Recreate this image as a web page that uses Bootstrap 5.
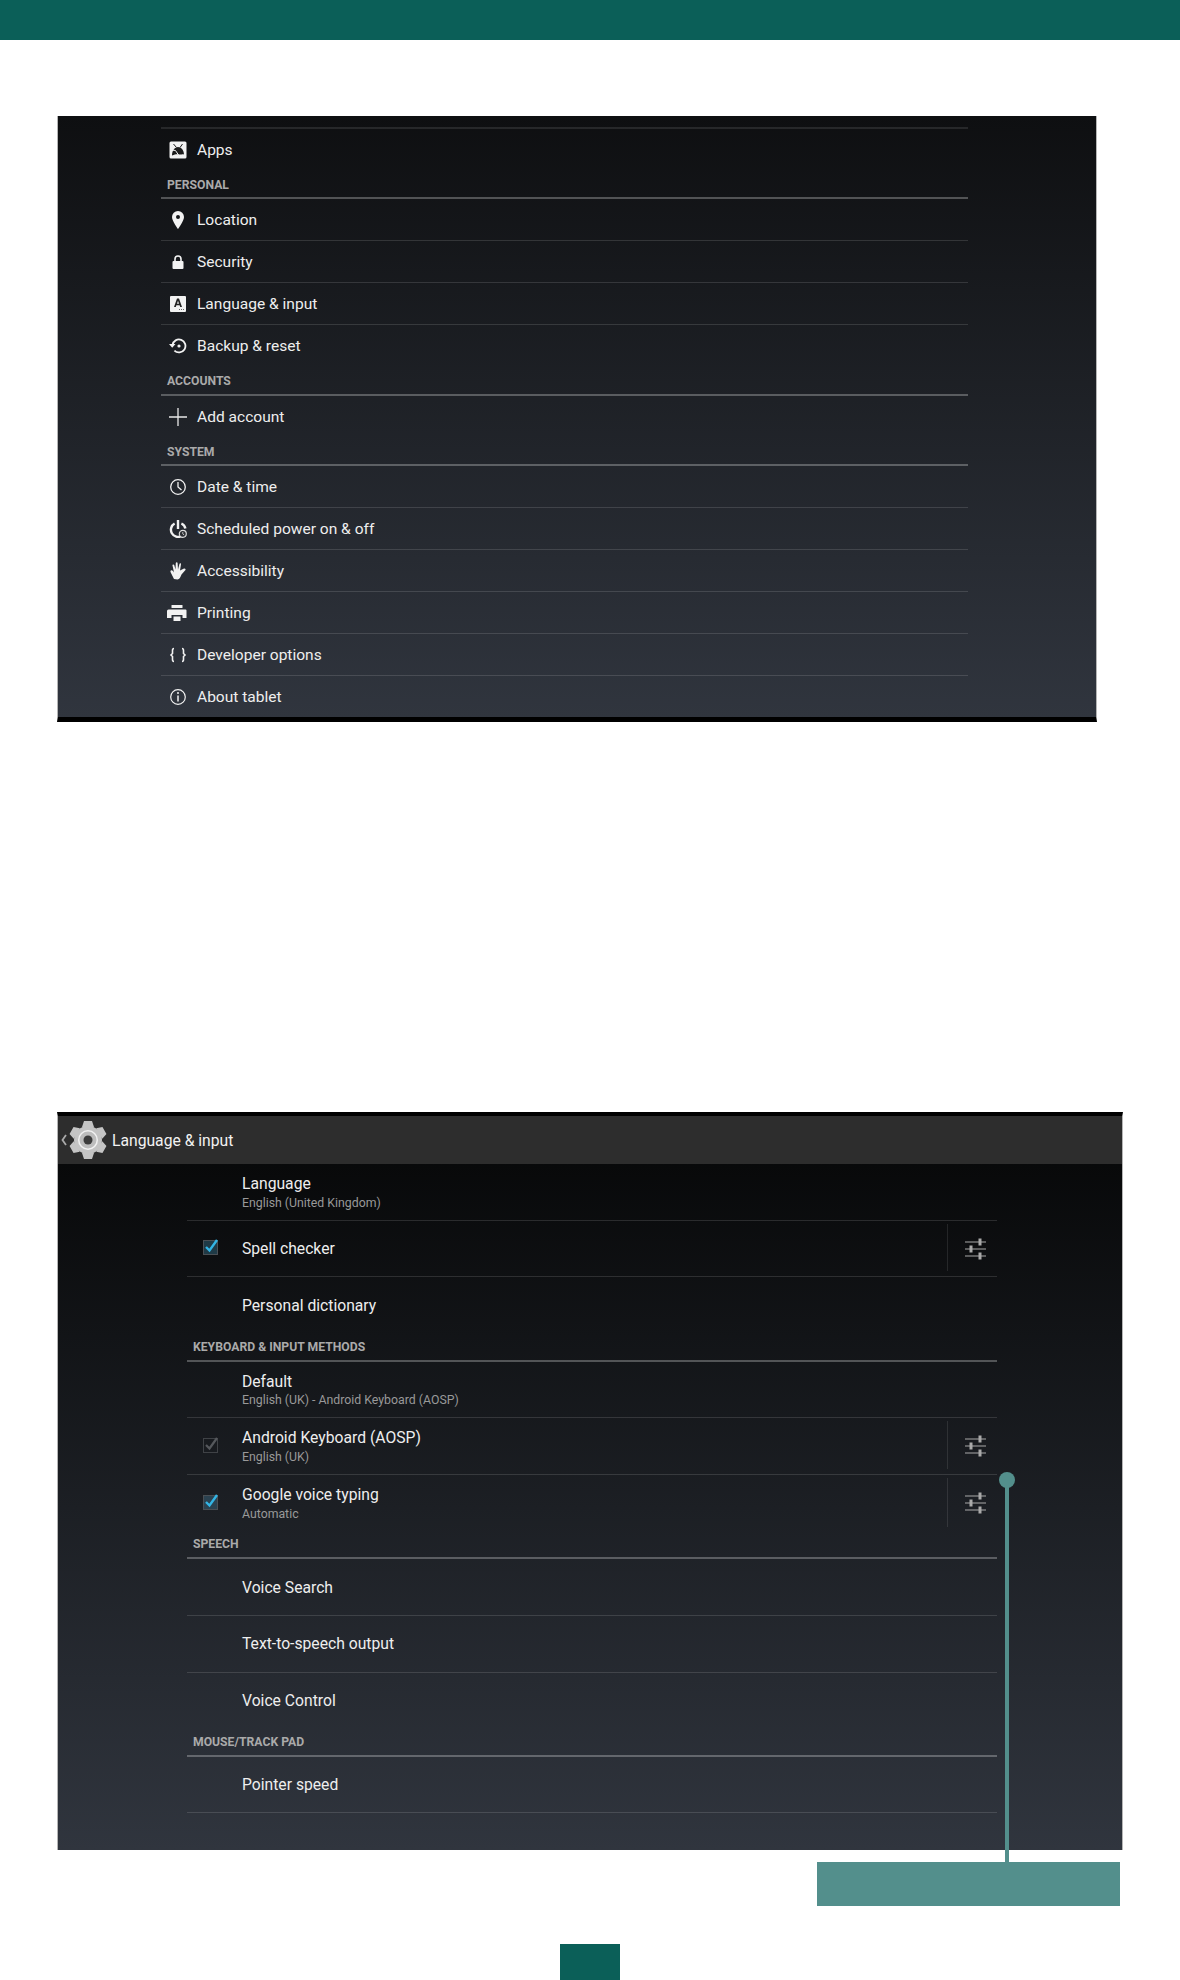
<!DOCTYPE html>
<html lang="en">
<head>
  <meta charset="UTF-8" />
  <meta name="viewport" content="width=device-width, initial-scale=1" />
  <title>Language &amp; input</title>
  <link href="https://cdn.jsdelivr.net/npm/bootstrap@5.3.0/dist/css/bootstrap.min.css" rel="stylesheet" />
  <style>
    body {
      background: #fff;
      font-family: Roboto, "Liberation Sans", sans-serif;
      position: relative;
      height: 1980px;
      overflow: hidden;
    }

    .top-band { height: 40px; background: #0b5f58; }

    .shot-a {
      margin: 76px 0 0 57px;
      width: 1040px;
      height: 606px;
      background: linear-gradient(#0e0f11, #30353e);
      border-left: 1px solid #b5b5b5;
      border-right: 1px solid #b5b5b5;
      border-bottom: 5px solid #000;
      padding-left: 103px;
    }
    .shot-b {
      margin: 390px 0 0 57px;
      width: 1066px;
      height: 738px;
      border-top: 4px solid #000;
      border-left: 1px solid #b5b5b5;
      border-right: 1px solid #b5b5b5;
    }
    .action-bar {
      height: 48px;
      background: #2d2d2d;
      color: #f2f2f2;
      font-size: 15.7px;
    }
    .back-ico { margin-left: 3px; }
    .gear-ico { margin-left: 2px; }
    .bar-title { margin-left: 5px; padding-top: 2px; }
    .shot-b-body {
      height: 686px;
      background: linear-gradient(#08090a, #30353e);
      padding-left: 129px;
    }

    .list-a { width: 807px; }
    .list-b { width: 810px; }

    .first-gap { height: 13px; border-bottom: 2px solid rgba(255, 255, 255, .1); }

    .row-a {
      height: 42px;
      color: #eee;
      font-size: 15.55px;
      border-bottom: 1px solid rgba(255, 255, 255, .13);
    }
    .row-a.no-line { border-bottom: 0; }
    .row-a .ico {
      width: 36px;
      padding-left: 8px;
    }
    .row-a .lbl { padding-top: 1px; }
    .print-ico { margin-left: -2px; }
    .sec-a, .sec-b {
      color: #aaa;
      font-size: 12.2px;
      font-weight: 700;
      border-bottom: 2px solid rgba(255, 255, 255, .27);
      padding-left: 6px;
      line-height: 1;
      align-items: center;
    }
    .sec-a { height: 28.4px; padding-top: 2px; }
    .sec-b { height: 27.5px; }

    .row-b {
      height: 56.7px;
      padding-top: 2px;
      color: #eee;
      font-size: 15.7px;
      border-bottom: 1px solid rgba(255, 255, 255, .13);
      line-height: 1.2;
    }
    .row-b.no-line { border-bottom: 0; }
    .row-b .chk-slot { width: 55px; padding-left: 16px; }
    .row-b small.sub { display: block; color: #999; font-size: 12.3px; margin-top: 2px; }
    .tune-slot {
      width: 50px;
      align-self: stretch;
      margin: 1px 0 5px;
      padding: 2px 0 0 17px;
      border-left: 1px solid rgba(255, 255, 255, .1);
    }

    .chk {
      display: block;
      width: 16px;
      height: 16px;
      margin-top: -5px;
      overflow: visible;
    }

    .callout {
      width: 303px;
      height: 44px;
      background: #538f8c;
      margin: 12px 0 0 817px;
    }
    .pin-dot {
      position: absolute;
      left: 999px;
      top: 1472px;
      width: 16px;
      height: 16px;
      border-radius: 50%;
      background: #538f8c;
    }
    .pin-line {
      position: absolute;
      left: 1005px;
      top: 1480px;
      width: 4px;
      height: 382px;
      background: #538f8c;
    }
    .page-tab {
      width: 60px;
      height: 36px;
      background: #0b5f58;
      margin: 38px 0 0 560px;
    }
  </style>
</head>
<body>
  <div class="top-band"></div>

  <div class="shot-a">
    <div class="list-a">
      <div class="first-gap"></div>

      <div class="row-a no-line d-flex align-items-center">
        <span class="ico d-flex"><svg width="18" height="18" viewBox="0 0 18 18"><rect x="0.5" y="0.5" width="17" height="17" rx="1.5" fill="#f2f2f2"/><path d="M3 14.500c0-5 3-8.500 6-8.500s6 3 6 7.500c-2-1-3 .5-5 0s-4 0-7 1z" fill="#1c1c1c"/><path d="M4.500 3l3 3.500M13.500 3l-2.500 3.500" stroke="#1c1c1c" stroke-width="1"/><path d="M2.500 9l4 .5 3 4.500" stroke="#f2f2f2" stroke-width="1" fill="none"/></svg></span>
        <span class="lbl">Apps</span>
      </div>
      <div class="sec-a d-flex">PERSONAL</div>

      <div class="row-a d-flex align-items-center">
        <span class="ico d-flex"><svg width="18" height="18" viewBox="0 0 18 18"><path fill-rule="evenodd" d="M9 0a6 6 0 0 0-6 6c0 4 6 12 6 12s6-8 6-12a6 6 0 0 0-6-6zm0 4a2 2 0 1 1 0 4 2 2 0 0 1 0-4z" fill="#f2f2f2"/></svg></span>
        <span class="lbl">Location</span>
      </div>
      <div class="row-a d-flex align-items-center">
        <span class="ico d-flex"><svg width="18" height="18" viewBox="0 0 18 18"><path d="M6 8V6a3 3 0 0 1 6 0v2" stroke="#f2f2f2" stroke-width="1.6" fill="none"/><rect x="3.5" y="8" width="11" height="8" rx="1" fill="#f2f2f2"/></svg></span>
        <span class="lbl">Security</span>
      </div>
      <div class="row-a d-flex align-items-center">
        <span class="ico d-flex"><svg width="18" height="18" viewBox="0 0 18 18"><rect x="1" y="1" width="16" height="16" rx="1" fill="#f2f2f2"/><path fill-rule="evenodd" d="M8 3.500h2L13 12h-1.800l-.6-1.800H7.400L6.800 12H5zm0 5.300h2L9 5.800z" fill="#222"/><path d="M10 14.500h5" stroke="#666" stroke-dasharray="1 1"/></svg></span>
        <span class="lbl">Language &amp; input</span>
      </div>
      <div class="row-a no-line d-flex align-items-center">
        <span class="ico d-flex"><svg width="18" height="18" viewBox="0 0 18 18"><path d="M3.500 8a6.500 6.500 0 1 1 1.900 5.600" stroke="#f2f2f2" stroke-width="1.800" fill="none"/><path d="M0 7h6.500L3.200 10.800z" fill="#f2f2f2"/><circle cx="10" cy="9" r="1.600" fill="#f2f2f2"/></svg></span>
        <span class="lbl">Backup &amp; reset</span>
      </div>
      <div class="sec-a d-flex">ACCOUNTS</div>

      <div class="row-a no-line d-flex align-items-center">
        <span class="ico d-flex"><svg width="18" height="18" viewBox="0 0 18 18"><path d="M0 9h18M9 0v18" stroke="#e8e8e8" stroke-width="1.300"/></svg></span>
        <span class="lbl">Add account</span>
      </div>
      <div class="sec-a d-flex">SYSTEM</div>

      <div class="row-a d-flex align-items-center">
        <span class="ico d-flex"><svg width="18" height="18" viewBox="0 0 18 18"><circle cx="9" cy="9" r="7.300" stroke="#f2f2f2" stroke-width="1.300" fill="none"/><path d="M9 4v5l3.500 3" stroke="#f2f2f2" stroke-width="1.300" fill="none"/></svg></span>
        <span class="lbl">Date &amp; time</span>
      </div>
      <div class="row-a d-flex align-items-center">
        <span class="ico d-flex"><svg width="18" height="18" viewBox="0 0 18 18"><path d="M5.600 3.500a7 7 0 1 0 7 12.500M12.400 3.500a7 7 0 0 1 4 5" stroke="#f2f2f2" stroke-width="2.400" fill="none"/><path d="M9 0v9" stroke="#f2f2f2" stroke-width="2.400"/><circle cx="13.800" cy="13.800" r="3.500" stroke="#ddd" stroke-width="1.200" fill="#2b2e33"/><path d="M13.800 12v2l1.400 1" stroke="#ddd" stroke-width="0.800" fill="none"/></svg></span>
        <span class="lbl">Scheduled power on &amp; off</span>
      </div>
      <div class="row-a d-flex align-items-center">
        <span class="ico d-flex"><svg width="18" height="18" viewBox="0 0 18 18"><path d="M5 17 L1.500 10 C1 8 3 8 4 9 L5 10.500 L3.500 3.500 C3.300 2.300 5 2 5.300 3.300 L6.500 7.500 L6.800 1 C7 0 8.500 0 8.600 1 L9 7.500 L10.500 1.800 C10.800 0.800 12.300 1.100 12 2.300 L11 8.500 L15 6.500 C16.500 6.200 17.200 7.700 16 8.600 L12.500 12.500 C11.500 15 10.500 17.500 8.500 17.500 Z" fill="#f2f2f2"/></svg></span>
        <span class="lbl">Accessibility</span>
      </div>
      <div class="row-a d-flex align-items-center">
        <span class="ico d-flex"><svg width="20" height="18" viewBox="0 0 20 18" class="print-ico"><rect x="4.500" y="1" width="11" height="3" rx="0.500" fill="#f2f2f2"/><path d="M1.500 5.500h17a1 1 0 0 1 1 1v7.500h-4V11H4.500v3H0V7a1.500 1.500 0 0 1 1.500-1.500z" fill="#f2f2f2"/><rect x="6.500" y="12.500" width="7" height="4.500" fill="#f2f2f2"/></svg></span>
        <span class="lbl">Printing</span>
      </div>
      <div class="row-a d-flex align-items-center">
        <span class="ico d-flex"><svg width="18" height="18" viewBox="0 0 18 18"><path d="M5 2.500C3.500 2.500 3.500 3.500 3.500 4.500v3L2 9l1.500 1.500v3c0 1 0 2 1.500 2M13 2.500c1.500 0 1.500 1 1.500 2v3L16 9l-1.500 1.500v3c0 1 0 2-1.500 2" stroke="#f2f2f2" stroke-width="1.600" fill="none"/></svg></span>
        <span class="lbl">Developer options</span>
      </div>
      <div class="row-a no-line d-flex align-items-center">
        <span class="ico d-flex"><svg width="18" height="18" viewBox="0 0 18 18"><circle cx="9" cy="9" r="7.300" stroke="#f2f2f2" stroke-width="1.200" fill="none"/><path d="M9 7.500v6" stroke="#f2f2f2" stroke-width="1.500"/><circle cx="9" cy="5" r="1" fill="#f2f2f2"/></svg></span>
        <span class="lbl">About tablet</span>
      </div>
    </div>
  </div>

  <div class="shot-b">
    <div class="action-bar d-flex align-items-center">
      <svg width="6" height="12" viewBox="0 0 6 12" class="back-ico"><path d="M5 1L1.500 6 5 11" stroke="#aaa" stroke-width="1.800" fill="none"/></svg>
      <svg width="38" height="38" viewBox="0 0 38 38" class="gear-ico">
        <g fill="#c4c4c4"><circle cx="19" cy="19" r="14"/><path d="M15 0h8l2 6H13zM15 38h8l2-6H13z"/><path d="M15 0h8l2 6H13zM15 38h8l2-6H13z" transform="rotate(60 19 19)"/><path d="M15 0h8l2 6H13zM15 38h8l2-6H13z" transform="rotate(120 19 19)"/></g>
        <circle cx="19" cy="19" r="10" fill="#f2f2f2"/><circle cx="19" cy="19" r="8.500" fill="#bdbdbd"/><circle cx="19" cy="19" r="4.500" fill="#3c3c3c"/>
      </svg>
      <span class="bar-title">Language &amp; input</span>
    </div>
    <div class="shot-b-body">
      <div class="list-b">
        <div class="row-b d-flex align-items-center">
          <span class="chk-slot"></span>
          <div>Language<small class="sub">English (United Kingdom)</small></div>
        </div>
        <div class="row-b d-flex align-items-center">
          <span class="chk-slot"><svg class="chk" viewBox="0 0 16 16"><rect x="0.5" y="1.500" width="14" height="14" fill="#1f3a46" stroke="#4a4f54"/><path d="M3 8l3.500 3.500L14 1" stroke="#33b5e5" stroke-width="2.400" fill="none"/></svg></span>
          <div class="flex-grow-1">Spell checker</div>
          <span class="tune-slot d-flex align-items-center"><svg width="22" height="22" viewBox="0 0 22 22"><g stroke="#aaa" fill="#aaa"><path d="M0 4h21M0 11h21M0 18h21" stroke-width="1.200"/><rect x="14" y="1" width="2" height="6"/><rect x="5" y="8" width="2" height="6"/><rect x="14" y="15" width="2" height="6"/></g></svg></span>
        </div>
        <div class="row-b no-line d-flex align-items-center">
          <span class="chk-slot"></span>
          <div>Personal dictionary</div>
        </div>
        <div class="sec-b d-flex">KEYBOARD &amp; INPUT METHODS</div>
        <div class="row-b d-flex align-items-center">
          <span class="chk-slot"></span>
          <div>Default<small class="sub">English (UK) - Android Keyboard (AOSP)</small></div>
        </div>
        <div class="row-b d-flex align-items-center">
          <span class="chk-slot"><svg class="chk" viewBox="0 0 16 16"><rect x="0.5" y="1.500" width="14" height="14" fill="none" stroke="#3f4246"/><path d="M3 8l3.500 3.500L14 1" stroke="#55585c" stroke-width="2.200" fill="none"/></svg></span>
          <div class="flex-grow-1">Android Keyboard (AOSP)<small class="sub">English (UK)</small></div>
          <span class="tune-slot d-flex align-items-center"><svg width="22" height="22" viewBox="0 0 22 22"><g stroke="#aaa" fill="#aaa"><path d="M0 4h21M0 11h21M0 18h21" stroke-width="1.200"/><rect x="14" y="1" width="2" height="6"/><rect x="5" y="8" width="2" height="6"/><rect x="14" y="15" width="2" height="6"/></g></svg></span>
        </div>
        <div class="row-b no-line d-flex align-items-center">
          <span class="chk-slot"><svg class="chk" viewBox="0 0 16 16"><rect x="0.5" y="1.500" width="14" height="14" fill="#2b4250" stroke="#4a4f54"/><path d="M3 8l3.500 3.500L14 1" stroke="#33b5e5" stroke-width="2.400" fill="none"/></svg></span>
          <div class="flex-grow-1">Google voice typing<small class="sub">Automatic</small></div>
          <span class="tune-slot d-flex align-items-center"><svg width="22" height="22" viewBox="0 0 22 22"><g stroke="#aaa" fill="#aaa"><path d="M0 4h21M0 11h21M0 18h21" stroke-width="1.200"/><rect x="14" y="1" width="2" height="6"/><rect x="5" y="8" width="2" height="6"/><rect x="14" y="15" width="2" height="6"/></g></svg></span>
        </div>
        <div class="sec-b d-flex">SPEECH</div>
        <div class="row-b d-flex align-items-center"><span class="chk-slot"></span><div>Voice Search</div></div>
        <div class="row-b d-flex align-items-center"><span class="chk-slot"></span><div>Text-to-speech output</div></div>
        <div class="row-b no-line d-flex align-items-center"><span class="chk-slot"></span><div>Voice Control</div></div>
        <div class="sec-b d-flex">MOUSE/TRACK PAD</div>
        <div class="row-b d-flex align-items-center"><span class="chk-slot"></span><div>Pointer speed</div></div>
      </div>
    </div>
  </div>

  <div class="callout"></div>
  <div class="page-tab"></div>

  <div class="pin-line"></div>
  <div class="pin-dot"></div>

  <script src="https://cdn.jsdelivr.net/npm/bootstrap@5.3.0/dist/js/bootstrap.bundle.min.js"></script>
</body>
</html>
